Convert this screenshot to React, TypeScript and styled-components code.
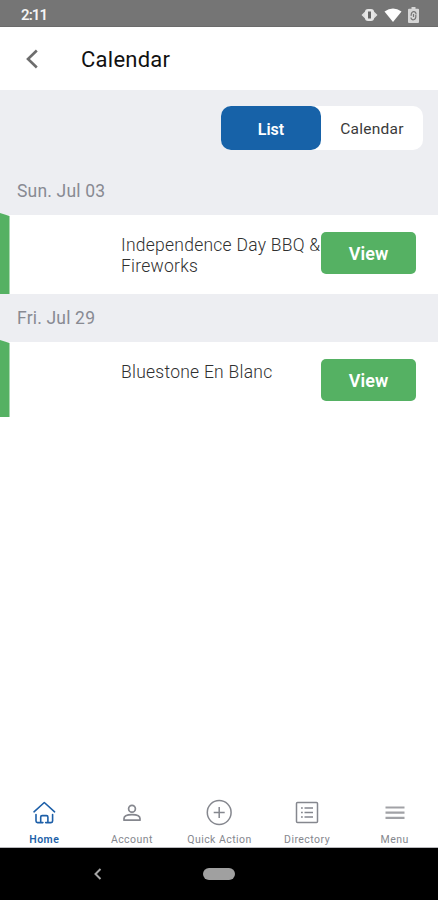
import React from "react";
import styled, { createGlobalStyle } from "styled-components";

const GlobalStyle = createGlobalStyle`
  * { box-sizing: border-box; }
  body { margin: 0; background: #fff; font-family: Roboto, "Liberation Sans", sans-serif; }
  button { font: inherit; border: 0; padding: 0; margin: 0; background: none; }
`;

const Screen = styled.div`
  width: 438px;
  height: 900px;
  display: flex;
  flex-direction: column;
  overflow: hidden;
  background: #fff;
`;

const StatusBar = styled.div`
  height: 27px;
  flex: none;
  display: flex;
  align-items: center;
  justify-content: space-between;
  padding: 3px 19px 0 21px;
  background: #757575;
  border-bottom: 1px solid #6b6b6b;
  color: #f4f4f4;
  font-size: 15px;
  font-weight: 600;
  letter-spacing: -0.9px;
  line-height: 18px;
`;

const StatusIcons = styled.div`
  display: flex;
  align-items: center;
  gap: 6px;
  svg { display: block; }
`;

const Header = styled.header`
  height: 63px;
  flex: none;
  display: flex;
  align-items: center;
  padding: 2px 0 0 25px;
`;

const BackButton = styled.button`
  width: 56px;
  height: 24px;
  display: flex;
  align-items: center;
  padding-bottom: 2px;
`;

const Title = styled.h1`
  margin: 0;
  font-size: 22px;
  line-height: 26px;
  font-weight: 450;
  letter-spacing: 0.25px;
  color: #111;
`;

const Toolbar = styled.div`
  height: 77px;
  flex: none;
  display: flex;
  justify-content: flex-end;
  padding: 16px 15px 0 0;
  background: #edeef2;
`;

const Segmented = styled.div`
  width: 202px;
  height: 44px;
  display: flex;
  background: #fff;
  border-radius: 10px;
`;

const Segment = styled.button<{ $active?: boolean }>`
  width: ${(p) => (p.$active ? 100 : 102)}px;
  height: 44px;
  padding-top: 2px;
  border-radius: 10px;
  background: ${(p) => (p.$active ? "#1762a8" : "transparent")};
  color: ${(p) => (p.$active ? "#fff" : "#3a3a3a")};
  font-size: ${(p) => (p.$active ? 16 : 15.5)}px;
  font-weight: ${(p) => (p.$active ? 650 : 450)};
  letter-spacing: ${(p) => (p.$active ? 0 : 0.25)}px;
`;

const DateHeader = styled.div`
  height: 48px;
  flex: none;
  padding: 14px 17px 0;
  background: #edeef2;
  color: #888a92;
  font-size: 17.5px;
  line-height: 20px;
  font-weight: 450;
  letter-spacing: 0.18px;
`;

const EventRow = styled.div<{ $height: number }>`
  height: ${(p) => p.$height}px;
  flex: none;
  display: flex;
  align-items: flex-start;
  padding-right: 22px;
  background: #fff;
`;

const Accent = styled.div`
  width: 10px;
  height: calc(100% + 2px);
  flex: none;
  margin-top: -2px;
  margin-right: 111px;
  background: #55b163;
  clip-path: polygon(0 0, 9.5px 3px, 9.5px 100%, 0 100%);
`;

const EventName = styled.div`
  width: 200px;
  flex: none;
  padding-top: 20px;
  color: #303030;
  font-size: 17.5px;
  line-height: 21px;
  font-weight: 350;
  letter-spacing: 0.25px;
  white-space: pre;
`;

const ViewButton = styled.button`
  width: 95px;
  height: 42px;
  flex: none;
  margin-top: 17px;
  padding-top: 1px;
  border-radius: 5px;
  background: #55b163;
  color: #fff;
  font-size: 18px;
  font-weight: 600;
`;

const Spacer = styled.div`
  flex: 1;
`;

const TabBar = styled.nav`
  height: 58px;
  flex: none;
  display: grid;
  grid-template-columns: repeat(5, 87.6px);
  padding-left: 0.5px;
  border-bottom: 1px solid #b8b8bc;
`;

const Tab = styled.button<{ $active?: boolean }>`
  display: flex;
  flex-direction: column;
  align-items: center;
  color: ${(p) => (p.$active ? "#1d5fa8" : "#85878e")};
  svg { display: block; height: 28px; margin-top: 8px; }
`;

const TabLabel = styled.span<{ $bold?: boolean }>`
  margin: 7px 0 0;
  font-size: 10.5px;
  line-height: 13px;
  font-weight: ${(p) => (p.$bold ? 650 : 400)};
  letter-spacing: 0.45px;
  white-space: nowrap;
`;

const SystemNav = styled.div`
  height: 52px;
  flex: none;
  display: grid;
  grid-template-columns: 195px 48px 195px;
  align-items: center;
  justify-items: center;
  background: #000;
`;

const HomePill = styled.div`
  width: 32px;
  height: 12px;
  border-radius: 6px;
  background: #a0a0a0;
`;

const stroke = { fill: "none", stroke: "currentColor", strokeWidth: 1.5 } as const;

const HomeIcon = () => (
  <svg width="28" height="28" {...stroke} strokeWidth={1.6} strokeLinecap="round" strokeLinejoin="round">
    <path d="M4 13.800 14.300 4.500l10.300 9.300M6 16.500V23q0 1.600 1.600 1.600h3.100V19q0-1.400 1.400-1.400h4.400q1.400 0 1.400 1.400v5.600H21Q22.600 24.600 22.600 23v-6.500M10.700 24.600h2.200M15.700 24.600h2.200" />
  </svg>
);

const AccountIcon = () => (
  <svg width="28" height="28" {...stroke} strokeWidth={1.700}>
    <circle cx="14" cy="10.700" r="3.400" />
    <path d="M6 22.200v-1.600c0-2.700 4-4 8-4s8 1.300 8 4v1.600z" strokeLinejoin="round" />
  </svg>
);

const PlusIcon = () => (
  <svg width="28" height="28" {...stroke}>
    <circle cx="14.200" cy="14.500" r="11.900" />
    <path d="M8.700 14.500h11M14.200 9v11" />
  </svg>
);

const DirectoryIcon = () => (
  <svg width="28" height="28" {...stroke}>
    <rect x="3.500" y="4.500" width="21" height="20" rx="1" />
    <path d="M8 10h1.800M11.500 10h8.500M8 14.500h1.800M11.500 14.500h8.500M8 19h1.800M11.500 19h8.500" />
  </svg>
);

const MenuIcon = () => (
  <svg width="28" height="28" fill="none" stroke="#a1a2a6" strokeWidth="2.200">
    <path d="M4.500 9.500h19M4.500 14.600h19M4.500 19.800h19" />
  </svg>
);

const tabs = [
  { label: "Home", Icon: HomeIcon, active: true },
  { label: "Account", Icon: AccountIcon },
  { label: "Quick Action", Icon: PlusIcon },
  { label: "Directory", Icon: DirectoryIcon },
  { label: "Menu", Icon: MenuIcon },
];

const events = [
  { date: "Sun. Jul 03", name: "Independence Day BBQ &\nFireworks", height: 79 },
  { date: "Fri. Jul 29", name: "Bluestone En Blanc", height: 75 },
];

export default function App() {
  return (
    <Screen>
      <GlobalStyle />
      <StatusBar>
        <span>2:11</span>
        <StatusIcons>
          <svg width="17" height="14" viewBox="0 0 17 14">
            <path d="M5 2.500 0.500 7 5 11.500zM12 2.500 16.500 7 12 11.500z" fill="#dedede" />
            <rect x="4" y="1" width="9" height="12" rx="3" fill="#e6e6e6" />
            <rect x="7" y="3.500" width="3" height="7" fill="#666" />
          </svg>
          <svg width="18" height="14" viewBox="0 0 17 14">
            <path d="M0 3.500Q8.500-2.500 17 3.500L8.500 14z" fill="#fff" />
          </svg>
          <svg width="11" height="16" viewBox="0 0 11 16">
            <path d="M3.500 0h4v1.800H10q1 0 1 1V15q0 1-1 1H1q-1 0-1-1V2.800q0-1 1-1h2.500z" fill="#d6d6d6" />
            <path d="M3.200 8.800C2.500 3.500 8.500 3.500 8 7.500M7.800 8C8.500 14 2.800 13.800 3 10.500M5.500 7v3" fill="none" stroke="#757575" strokeWidth="1.200" />
          </svg>
        </StatusIcons>
      </StatusBar>
      <Header>
        <BackButton aria-label="Back">
          <svg width="14" height="20" fill="none" stroke="#6d6d6d" strokeWidth="2.600">
            <path d="M11.800 1.500 3 10l8.800 8.500" />
          </svg>
        </BackButton>
        <Title>Calendar</Title>
      </Header>
      <Toolbar>
        <Segmented>
          <Segment $active>List</Segment>
          <Segment>Calendar</Segment>
        </Segmented>
      </Toolbar>
      {events.map((e) => (
        <React.Fragment key={e.date}>
          <DateHeader>{e.date}</DateHeader>
          <EventRow $height={e.height}>
            <Accent />
            <EventName>{e.name}</EventName>
            <ViewButton>View</ViewButton>
          </EventRow>
        </React.Fragment>
      ))}
      <Spacer />
      <TabBar>
        {tabs.map(({ label, Icon, active }) => (
          <Tab key={label} $active={active}>
            <Icon />
            <TabLabel $bold={active}>{label}</TabLabel>
          </Tab>
        ))}
      </TabBar>
      <SystemNav>
        <svg width="12" height="14" fill="none" stroke="#a6a6a6" strokeWidth="2">
          <path d="M8.500 2 3.500 7l5 5" />
        </svg>
        <HomePill />
      </SystemNav>
    </Screen>
  );
}
